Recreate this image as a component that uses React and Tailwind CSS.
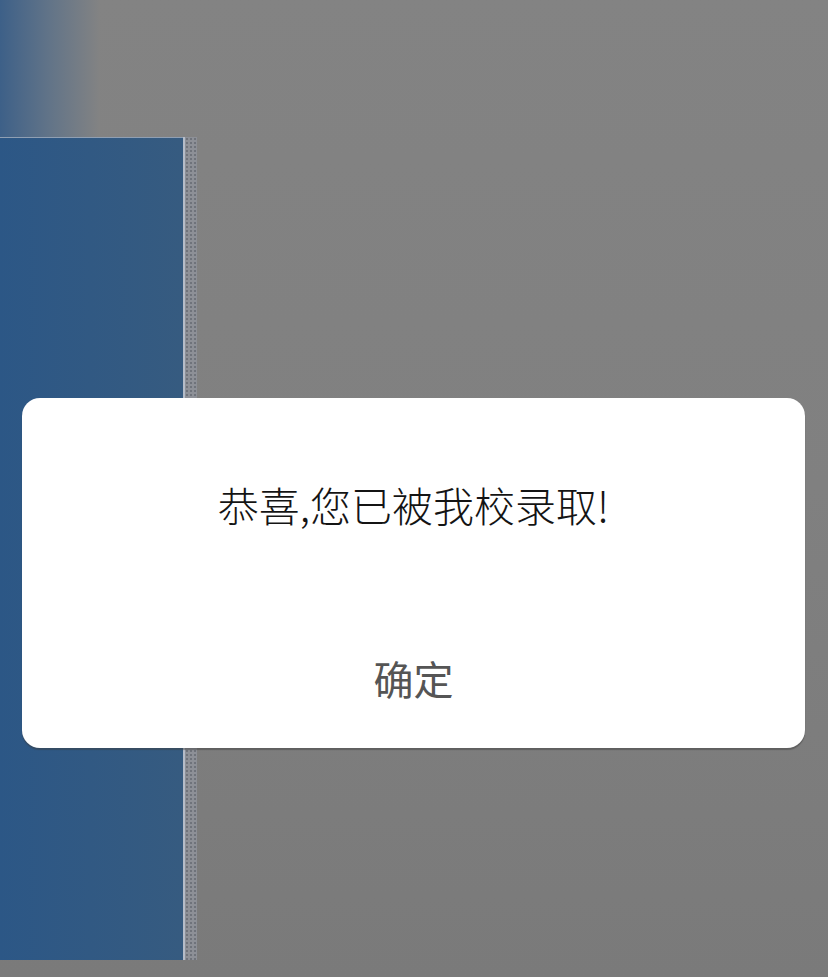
import React from "react";

const App = () => {
    return (
        <div
            className="relative w-[828px] h-[977px] overflow-hidden bg-gradient-to-b from-[#838383] via-[#808080] to-[#7a7a7a]"
            style={{fontFamily: '"Noto Sans CJK SC", "Noto Sans", sans-serif'}}
        >
            {/* blurred top strip */}
            <div className="h-[137px] w-[100px] bg-gradient-to-r from-[#3d6088] via-[#627488] to-[#838383]"/>

            {/* left panel + dotted edge */}
            <div className="flex">
                <div className="w-[183px] h-[823px] bg-gradient-to-r from-[#2c5786] to-[#365b80] border-t border-[#8f9fb3]"/>
                <div className="w-[14px] h-[823px] bg-[#8d9097] border-l-2 border-[#b5bcc8] bg-[radial-gradient(circle,#6f737b_1px,transparent_1.2px)] bg-[length:4px_4px]"/>
            </div>

            {/* dialog */}
            <div className="absolute left-[22px] top-[398px] w-[783px] h-[350px] bg-white rounded-[18px] shadow-[0_2px_1px_rgba(60,60,60,0.45)] flex flex-col items-center">
                <p className="pt-[82px] text-[41px] leading-[48px] font-light text-[#141414]">恭喜,您已被我校录取!</p>
                <button className="mt-[126px] text-[40px] leading-[48px] text-[#555555]">确定</button>
            </div>
        </div>
    );
};

export default App;
